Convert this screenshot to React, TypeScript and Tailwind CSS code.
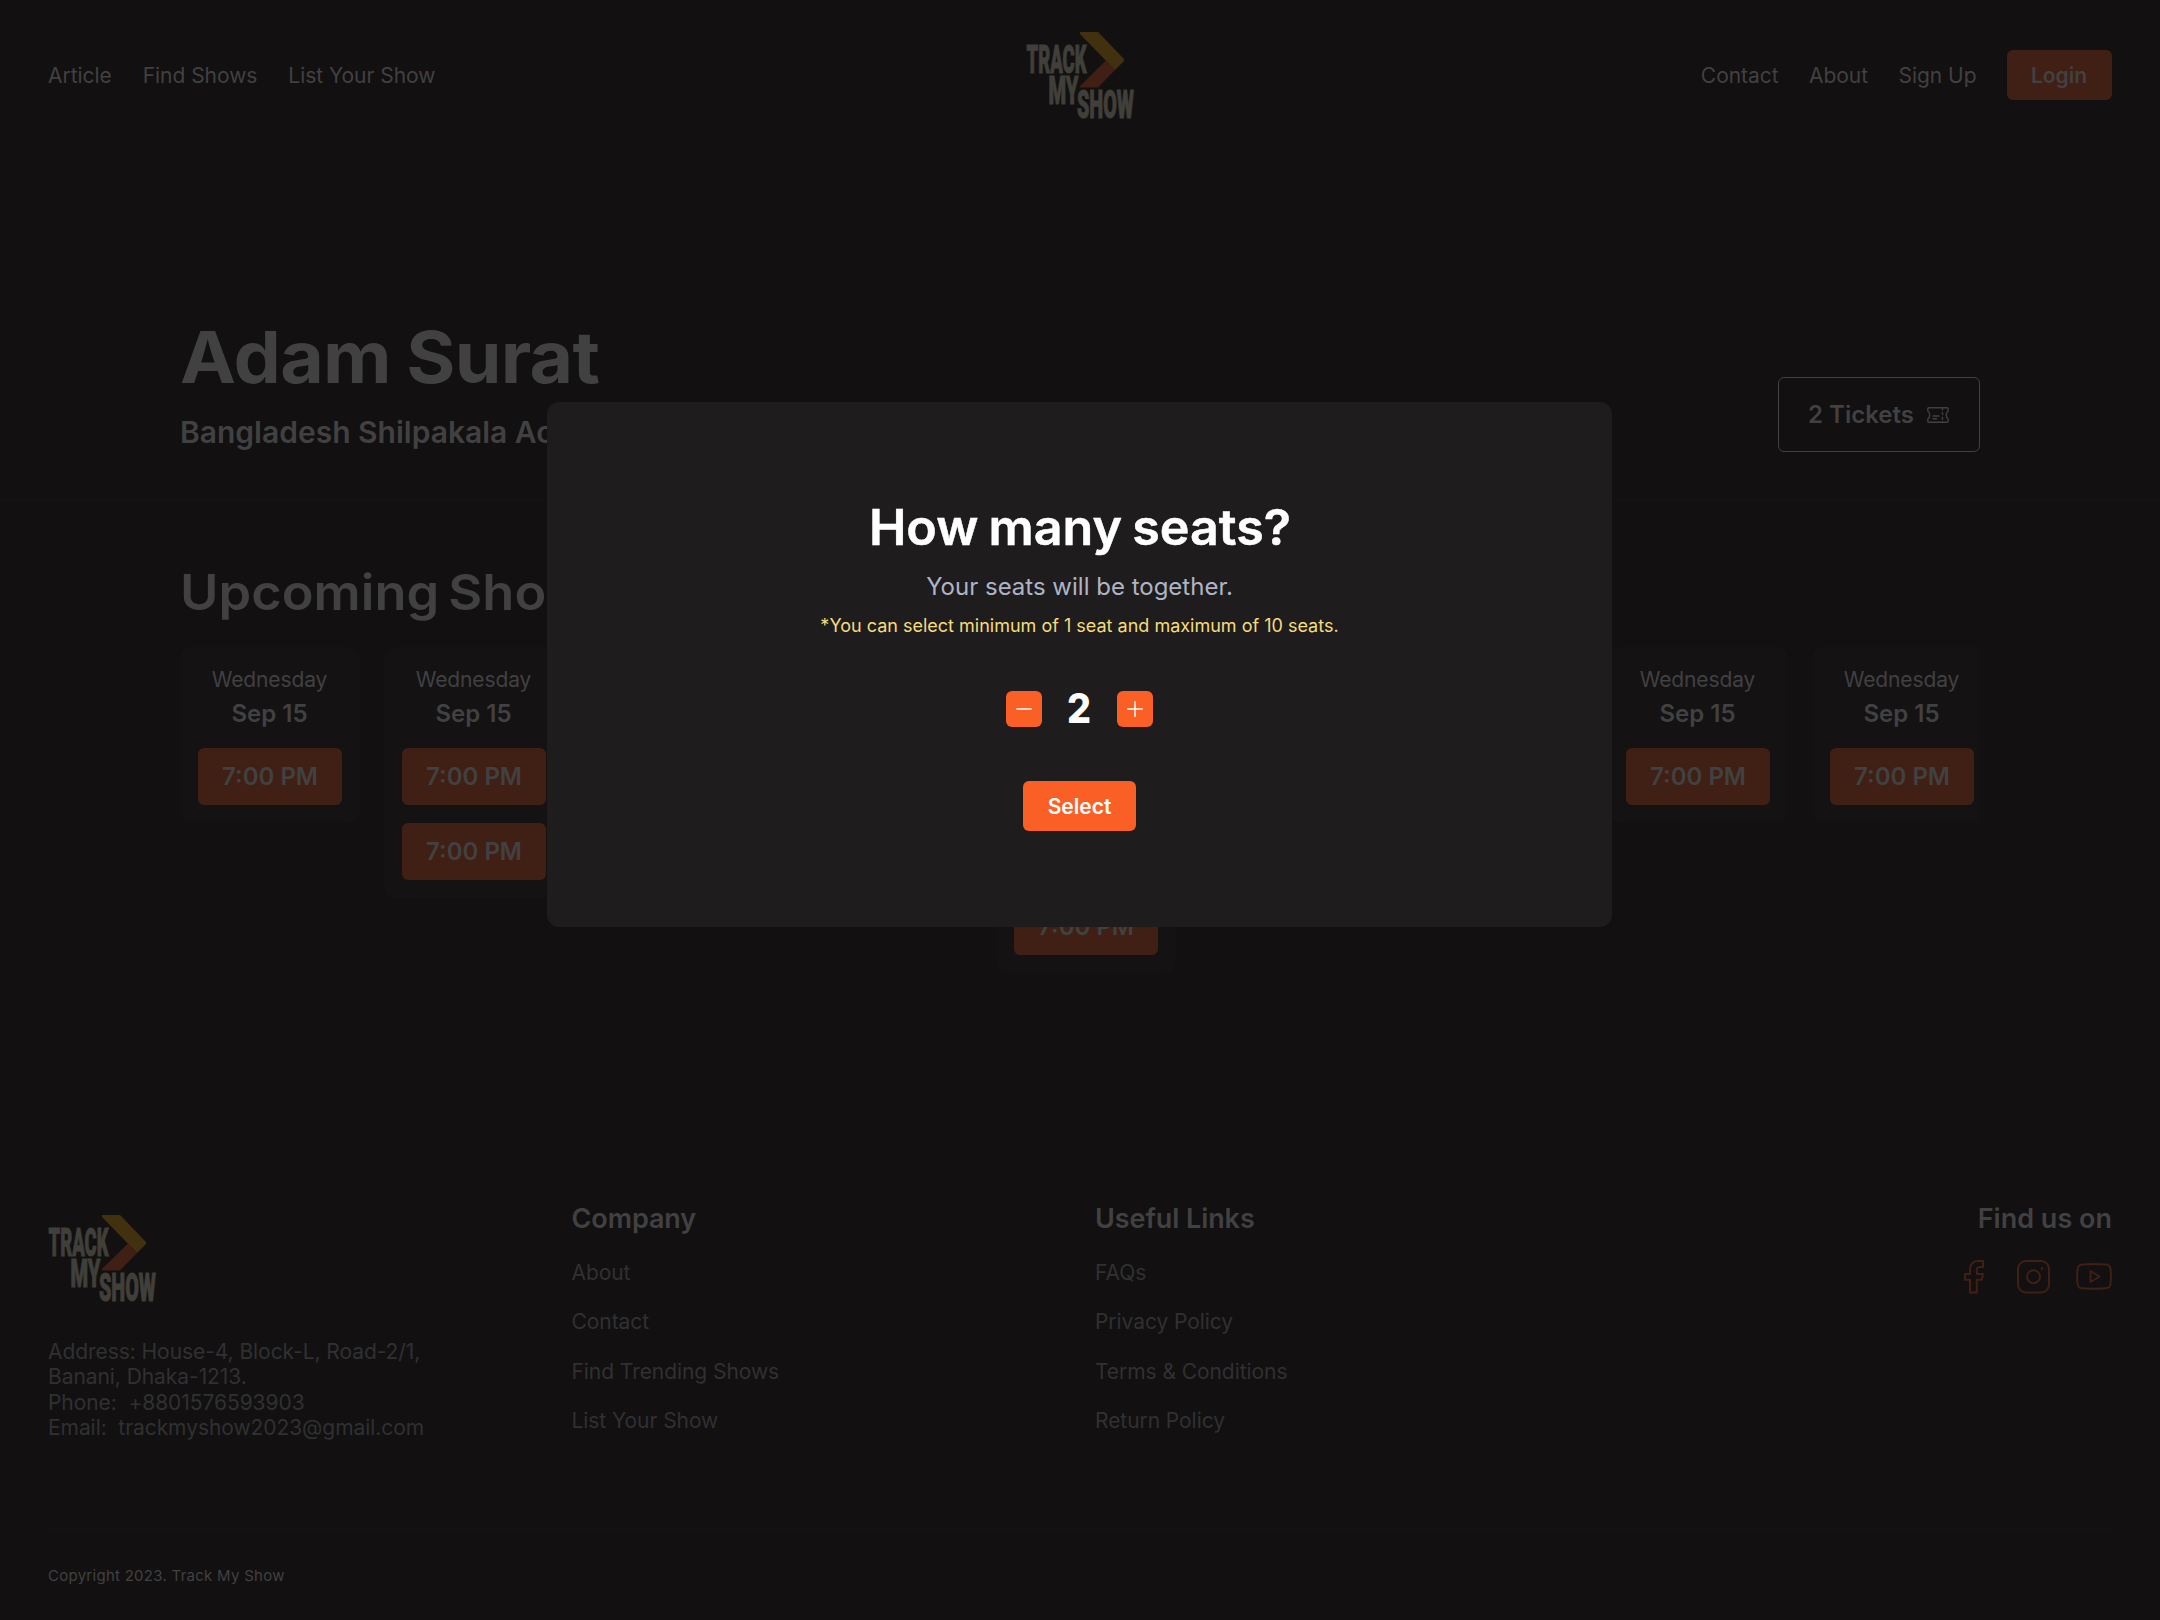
import React from "react";

const days = [1, 2, 1, 1, 3, 1, 1, 1, 1];

const company = ["About", "Contact", "Find Trending Shows", "List Your Show"];
const useful = ["FAQs", "Privacy Policy", "Terms & Conditions", "Return Policy"];

function Logo() {
  return (
    <svg width="108" height="87" viewBox="0 0 108 87" className="block shrink-0 overflow-visible">
      <path d="M54 0H72L98 27V29L89 38L54 2Z" fill="#42310f" />
      <path d="M80 28.5L89 38L72 55.5H54V54Z" fill="#401f15" />
      <g fill="#403f3a" stroke="#403f3a" strokeWidth="1.1" fontFamily="Roboto, sans-serif" fontWeight="900" fontSize="39">
        <text x="0.5" y="41.400" textLength="60" lengthAdjust="spacingAndGlyphs">TRACK</text>
        <text x="22.5" y="72.2" textLength="30" lengthAdjust="spacingAndGlyphs">MY</text>
        <text x="51" y="86" textLength="57" lengthAdjust="spacingAndGlyphs">SHOW</text>
      </g>
    </svg>
  );
}

function TicketIcon() {
  return (
    <svg width="22" height="16" viewBox="0 0 22 16" fill="none" stroke="#414141" strokeWidth="1.4" strokeLinecap="round" strokeLinejoin="round" className="block">
      <path d="M2 .8H20Q21.2.8 21.2 2V4Q19.3 5 19.3 8T21.2 12V14Q21.2 15.2 20 15.2H2Q.8 15.2.8 14V12Q2.700 11 2.700 8T.8 4V2Q.8.8 2 .8Z" />
      <path d="M15.500 1V15" strokeDasharray="2 2.600" />
      <path d="M6 9H12M6 11.700H9.500" />
    </svg>
  );
}

function FacebookIcon() {
  return (
    <svg width="20" height="34" viewBox="0 0 20 34" fill="none" stroke="#401f15" strokeWidth="2" strokeLinejoin="round" className="block">
      <path d="M19 1V7H15.500Q12.800 7 12.800 9.500V14H19L18 19.800H12.800V32.500H6V19.800H1V14H6V9.500Q6 1 14.500 1Z" />
    </svg>
  );
}

function InstagramIcon() {
  return (
    <svg width="33" height="34" viewBox="0 0 33 34" fill="none" stroke="#401f15" strokeWidth="2" className="block">
      <rect x="1" y="1" width="31" height="31.500" rx="8" />
      <circle cx="16.500" cy="16.700" r="6.500" />
      <circle cx="25" cy="8.500" r="1.300" fill="#401f15" stroke="none" />
    </svg>
  );
}

function YoutubeIcon() {
  return (
    <svg width="36" height="34" viewBox="0 0 36 34" fill="none" stroke="#401f15" strokeWidth="2" strokeLinejoin="round" className="block">
      <path d="M6 4.500Q18 3.500 30 4.500Q34 5 34.500 9Q35.300 16.500 34.500 24Q34 28 30 28.300Q18 29.300 6 28.300Q2 28 1.500 24Q.7 16.500 1.500 9Q2 5 6 4.500Z" />
      <path d="M14.500 11V22L23.500 16.500Z" />
    </svg>
  );
}

function FooterColumn({ title, links }: { title: string; links: string[] }) {
  return (
    <div>
      <h3 className="text-[27px] leading-[34px] font-semibold tracking-[-0.003em] text-[#414141]">{title}</h3>
      <ul className="mt-[23.5px] flex flex-col gap-[23.5px] text-[21px] leading-[26px] tracking-[-0.003em] text-[#303132]">
        {links.map((l) => (
          <li key={l}>{l}</li>
        ))}
      </ul>
    </div>
  );
}

export default function App() {
  return (
    <div className="flex h-[1620px] w-[2160px] flex-col overflow-hidden bg-[#121011] font-['Inter',sans-serif] text-[#414141]">
      <header className="grid h-[150px] shrink-0 grid-cols-[1fr_auto_1fr] items-center px-12 text-[21px]">
        <nav className="flex gap-[31px] pt-[2px] tracking-[-0.002em]">
          <a>Article</a>
          <a>Find Shows</a>
          <a>List Your Show</a>
        </nav>
        <Logo />
        <nav className="flex items-center justify-end gap-[30.5px] tracking-[-0.002em]">
          <a className="pt-[2px]">Contact</a>
          <a className="pt-[2px]">About</a>
          <a className="pt-[2px]">Sign Up</a>
          <button className="h-[50px] w-[105px] rounded-md bg-[#401f15] pt-[2px] pr-px font-semibold">Login</button>
        </nav>
      </header>

      <section className="flex h-[350px] shrink-0 items-end justify-between border-b border-[#151314] px-[180px] pb-[47px]">
        <div className="mb-[2px]">
          <h1 className="origin-left scale-x-[1.043] text-[72px] leading-[90px] font-bold tracking-[-0.01em] [word-spacing:-0.02em]">Adam Surat</h1>
          <p className="mt-3 text-[30px] leading-9 font-semibold">Bangladesh Shilpakala Academy</p>
        </div>
        <button className="flex h-[75px] w-[202px] items-center justify-center gap-[13px] rounded-md border-[1.5px] border-[#414141] pt-px pr-px text-2xl font-semibold">
          2 Tickets
          <TicketIcon />
        </button>
      </section>

      <section className="h-[702px] shrink-0 px-[180px] pt-[62px]">
        <h2 className="origin-left scale-x-[1.058] text-[49.5px] leading-[60px] font-semibold [word-spacing:-0.08em]">Upcoming Shows</h2>
        <div className="mt-[25px] flex items-start gap-6 overflow-hidden">
          {days.map((count, i) => (
            <div key={i} className="flex w-[180px] shrink-0 flex-col items-center rounded-xl bg-[#141213] px-[18px] pt-5 pb-[18px]">
              <div className="pr-px text-[21px] leading-[26px] tracking-[-0.005em]">Wednesday</div>
              <div className="mt-[6px] pr-px text-2xl leading-[30px] font-semibold">Sep 15</div>
              <div className="mt-[19px] flex w-full flex-col gap-[18px]">
                {Array.from({ length: count }, (_, n) => (
                  <button key={n} className="h-[57px] w-full rounded-md bg-[#401f15] text-2xl font-semibold">7:00 PM</button>
                ))}
              </div>
            </div>
          ))}
        </div>
      </section>

      <footer className="flex grow flex-col px-12">
        <div className="grid h-[327px] grid-cols-4 gap-[30px]">
          <div className="pt-[13px]">
            <Logo />
            <address className="mt-[36.5px] text-[21px] leading-[25.5px] tracking-[-0.003em] whitespace-pre text-[#303132] not-italic">
              Address: House-4, Block-L, Road-2/1,
              <br />
              Banani, Dhaka-1213.
              <br />
              {"Phone:  +8801576593903"}
              <br />
              {"Email:  trackmyshow2023@gmail.com"}
            </address>
          </div>
          <FooterColumn title="Company" links={company} />
          <FooterColumn title="Useful Links" links={useful} />
          <div className="flex flex-col items-end">
            <h3 className="text-[27px] leading-[34px] font-semibold">Find us on</h3>
            <div className="mt-6 flex items-center">
              <FacebookIcon />
              <div className="pr-[26px] pl-[33px]">
                <InstagramIcon />
              </div>
              <YoutubeIcon />
            </div>
          </div>
        </div>
        <div className="border-t border-[#151314] pt-[36px] text-[15px] leading-5 tracking-[0.018em]">Copyright 2023. Track My Show</div>
      </footer>

      <div className="absolute top-[402px] left-[547px] flex h-[525px] w-[1065px] flex-col items-center rounded-xl bg-[#1e1c1d] pt-[95px] text-white">
        <h2 className="scale-x-[1.015] text-[49.5px] leading-[60px] font-semibold [-webkit-text-stroke:0.5px_white] [word-spacing:-0.05em]">How many seats?</h2>
        <p className="mt-[15px] text-2xl leading-[30px] text-[#aeb4c4]">Your seats will be together.</p>
        <p className="mt-[12px] text-lg leading-6 text-[#f5dc7c]">*You can select minimum of 1 seat and maximum of 10 seats.</p>
        <div className="mt-[53px] flex w-[147px] items-center justify-between">
          <button className="flex size-9 items-center justify-center rounded-md bg-[#fa5f26]">
            <svg width="16" height="16" viewBox="0 0 16 16" stroke="white" strokeWidth="1.500" strokeLinecap="round">
              <path d="M.8 8H15.200" />
            </svg>
          </button>
          <span className="-mt-[2px] scale-x-92 text-[41px] leading-9 font-extrabold">2</span>
          <button className="flex size-9 items-center justify-center rounded-md bg-[#fa5f26]">
            <svg width="16" height="16" viewBox="0 0 16 16" stroke="white" strokeWidth="1.500" strokeLinecap="round">
              <path d="M.8 8H15.200M8 .8V15.200" />
            </svg>
          </button>
        </div>
        <button className="mt-[54px] h-[50px] w-[113px] rounded-md bg-[#fa5f26] pt-[2px] text-[21px] font-semibold">Select</button>
      </div>
    </div>
  );
}
